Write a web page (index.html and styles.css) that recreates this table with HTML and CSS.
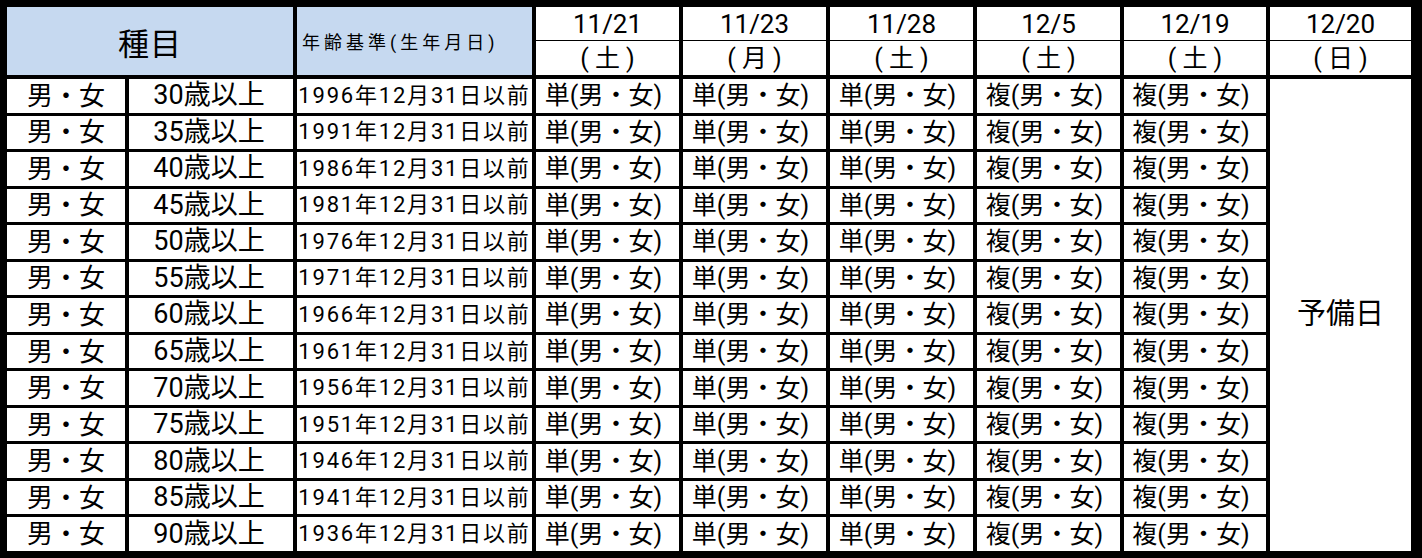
FILE: index.html
```html
<!DOCTYPE html>
<html lang="ja">
<head>
<meta charset="utf-8">
<link rel="stylesheet" href="styles.css">
</head>
<body>
<div class="sheet">
  <div class="grid">
    <div class="hd hd-kind">種目</div>
    <div class="hd hd-age">年齢基準(生年月日)</div>
    <div class="hd-date"><div class="d">11/21</div><div class="w">(土)</div></div>
    <div class="hd-date"><div class="d">11/23</div><div class="w">(月)</div></div>
    <div class="hd-date"><div class="d">11/28</div><div class="w">(土)</div></div>
    <div class="hd-date"><div class="d">12/5</div><div class="w">(土)</div></div>
    <div class="hd-date"><div class="d">12/19</div><div class="w">(土)</div></div>
    <div class="hd-date"><div class="d">12/20</div><div class="w">(日)</div></div>

    <div class="c sex">男・女</div><div class="c age">30歳以上</div><div class="c born">1996年12月31日以前</div><div class="c ev">単(男・女)</div><div class="c ev">単(男・女)</div><div class="c ev">単(男・女)</div><div class="c ev">複(男・女)</div><div class="c ev">複(男・女)</div>
    <div class="c reserve">予備日</div>
    <div class="c sex">男・女</div><div class="c age">35歳以上</div><div class="c born">1991年12月31日以前</div><div class="c ev">単(男・女)</div><div class="c ev">単(男・女)</div><div class="c ev">単(男・女)</div><div class="c ev">複(男・女)</div><div class="c ev">複(男・女)</div>
    <div class="c sex">男・女</div><div class="c age">40歳以上</div><div class="c born">1986年12月31日以前</div><div class="c ev">単(男・女)</div><div class="c ev">単(男・女)</div><div class="c ev">単(男・女)</div><div class="c ev">複(男・女)</div><div class="c ev">複(男・女)</div>
    <div class="c sex">男・女</div><div class="c age">45歳以上</div><div class="c born">1981年12月31日以前</div><div class="c ev">単(男・女)</div><div class="c ev">単(男・女)</div><div class="c ev">単(男・女)</div><div class="c ev">複(男・女)</div><div class="c ev">複(男・女)</div>
    <div class="c sex">男・女</div><div class="c age">50歳以上</div><div class="c born">1976年12月31日以前</div><div class="c ev">単(男・女)</div><div class="c ev">単(男・女)</div><div class="c ev">単(男・女)</div><div class="c ev">複(男・女)</div><div class="c ev">複(男・女)</div>
    <div class="c sex">男・女</div><div class="c age">55歳以上</div><div class="c born">1971年12月31日以前</div><div class="c ev">単(男・女)</div><div class="c ev">単(男・女)</div><div class="c ev">単(男・女)</div><div class="c ev">複(男・女)</div><div class="c ev">複(男・女)</div>
    <div class="c sex">男・女</div><div class="c age">60歳以上</div><div class="c born">1966年12月31日以前</div><div class="c ev">単(男・女)</div><div class="c ev">単(男・女)</div><div class="c ev">単(男・女)</div><div class="c ev">複(男・女)</div><div class="c ev">複(男・女)</div>
    <div class="c sex">男・女</div><div class="c age">65歳以上</div><div class="c born">1961年12月31日以前</div><div class="c ev">単(男・女)</div><div class="c ev">単(男・女)</div><div class="c ev">単(男・女)</div><div class="c ev">複(男・女)</div><div class="c ev">複(男・女)</div>
    <div class="c sex">男・女</div><div class="c age">70歳以上</div><div class="c born">1956年12月31日以前</div><div class="c ev">単(男・女)</div><div class="c ev">単(男・女)</div><div class="c ev">単(男・女)</div><div class="c ev">複(男・女)</div><div class="c ev">複(男・女)</div>
    <div class="c sex">男・女</div><div class="c age">75歳以上</div><div class="c born">1951年12月31日以前</div><div class="c ev">単(男・女)</div><div class="c ev">単(男・女)</div><div class="c ev">単(男・女)</div><div class="c ev">複(男・女)</div><div class="c ev">複(男・女)</div>
    <div class="c sex">男・女</div><div class="c age">80歳以上</div><div class="c born">1946年12月31日以前</div><div class="c ev">単(男・女)</div><div class="c ev">単(男・女)</div><div class="c ev">単(男・女)</div><div class="c ev">複(男・女)</div><div class="c ev">複(男・女)</div>
    <div class="c sex">男・女</div><div class="c age">85歳以上</div><div class="c born">1941年12月31日以前</div><div class="c ev">単(男・女)</div><div class="c ev">単(男・女)</div><div class="c ev">単(男・女)</div><div class="c ev">複(男・女)</div><div class="c ev">複(男・女)</div>
    <div class="c sex">男・女</div><div class="c age">90歳以上</div><div class="c born">1936年12月31日以前</div><div class="c ev">単(男・女)</div><div class="c ev">単(男・女)</div><div class="c ev">単(男・女)</div><div class="c ev">複(男・女)</div><div class="c ev">複(男・女)</div>
  </div>
</div>
</body>
</html>
```

FILE: styles.css
```css
html, body {
  margin: 0;
  padding: 0;
  background: #000;
}
body {
  width: 1422px;
  height: 558px;
  overflow: hidden;
  font-family: Roboto, "Noto Sans CJK JP", sans-serif;
  color: #000;
}
.sheet {
  padding: 7px 11px 7px 7px;
}
.grid {
  display: grid;
  grid-template-columns: 118px 164px 235px 143px 143px 143px 143px 142px 141px;
  grid-template-rows: 69px repeat(13, 1fr);
  column-gap: 4px;
  row-gap: 3px;
  height: 544px;
  background: #000;
}
.hd {
  background: #c6d9f0;
  height: 68px;
  display: flex;
  align-items: center;
}
.hd-kind {
  grid-column: 1 / span 2;
  justify-content: center;
  font-size: 31px;
  letter-spacing: 1px;
}
.hd-age {
  font-size: 18px;
  letter-spacing: 4px;
  padding-left: 5px;
  white-space: nowrap;
}
.hd-date {
  background: #fff;
  height: 68px;
  display: flex;
  flex-direction: column;
}
.hd-date .d {
  height: 32px;
  border-bottom: 1px solid #000;
  display: flex;
  align-items: center;
  justify-content: center;
  font-size: 26px;
  line-height: 1;
  padding-top: 1px;
}
.hd-date .w {
  flex: 1;
  display: flex;
  align-items: center;
  justify-content: center;
  font-size: 25px;
  letter-spacing: 6px;
  padding-left: 6px;
  line-height: 1;
}
.c {
  background: #fff;
  display: flex;
  align-items: center;
  justify-content: center;
  white-space: nowrap;
  line-height: 1;
}
.sex {
  font-size: 26px;
}
.age {
  font-size: 27px;
  padding-right: 4px;
}
.born {
  font-size: 22px;
  letter-spacing: 1.8px;
}
.ev {
  font-size: 25px;
  padding-right: 8px;
}
.reserve {
  grid-column: 9;
  grid-row: 2 / span 13;
  font-size: 29px;
}
```
